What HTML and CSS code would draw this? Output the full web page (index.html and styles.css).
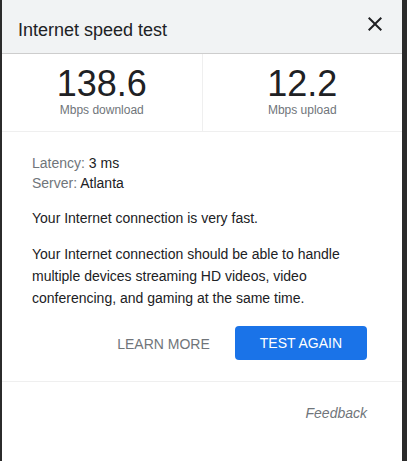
FILE: index.html
```html
<!DOCTYPE html>
<html lang="en">
<head>
<meta charset="utf-8">
<title>Internet speed test</title>
<link rel="stylesheet" href="styles.css">
</head>
<body>
<div class="panel">
  <div class="header">
    <div class="title">Internet speed test</div>
    <svg class="close" width="24" height="24" viewBox="0 0 24 24" aria-label="Close"><path d="M19 6.41L17.59 5 12 10.59 6.41 5 5 6.41 10.59 12 5 17.59 6.41 19 12 13.41 17.59 19 19 17.59 13.41 12z" fill="#202124"/></svg>
  </div>
  <div class="stats">
    <div class="stat">
      <div class="num">138.6</div>
      <div class="label">Mbps download</div>
    </div>
    <div class="stat">
      <div class="num">12.2</div>
      <div class="label">Mbps upload</div>
    </div>
  </div>
  <div class="body">
    <div class="meta">
      <div><span class="key">Latency:</span> 3 ms</div>
      <div><span class="key">Server:</span> Atlanta</div>
    </div>
    <p class="para">Your Internet connection is very fast.</p>
    <p class="para">Your Internet connection should be able to handle multiple devices streaming HD videos, video conferencing, and gaming at the same time.</p>
    <div class="actions">
      <span class="learn">LEARN MORE</span>
      <span class="btn">TEST AGAIN</span>
    </div>
  </div>
  <div class="footer">
    <span class="feedback">Feedback</span>
  </div>
</div>
</body>
</html>
```
FILE: styles.css
```css
html, body {
  margin: 0;
  padding: 0;
}
body {
  background: #2b2b2b;
  font-family: "Liberation Sans", Arial, sans-serif;
  color: #202124;
  height: 461px;
  overflow: hidden;
}
.panel {
  margin-left: 2px;
  width: 400px;
  height: 461px;
  background: #fff;
}
.header {
  background: #f1f3f4;
  height: 54px;
  box-sizing: border-box;
  padding: 18px 16px 0 16px;
  display: flex;
  justify-content: space-between;
  align-items: flex-start;
  border-bottom: 1px solid #cdcdcd;
}
.title {
  font-size: 18px;
  line-height: 24px;
  color: #202124;
}
.close {
  margin-top: -6px;
  margin-right: -0.5px;
}
.stats {
  display: flex;
  border-bottom: 1px solid #efefef;
}
.stat {
  flex: 1;
  text-align: center;
  padding: 12px 0 13px;
}
.stat + .stat {
  border-left: 1px solid #efefef;
}
.num {
  font-size: 36px;
  line-height: 36px;
  color: #202124;
}
.label {
  font-size: 12px;
  line-height: 16px;
  color: #70757a;
}
.body {
  padding: 21px 35px 21px 30px;
  border-bottom: 1px solid #efefef;
}
.meta {
  font-size: 14px;
  line-height: 20px;
}
.key {
  color: #70757a;
}
.para {
  margin: 14px 0 0;
  font-size: 14px;
  line-height: 22px;
}
.actions {
  margin-top: 17px;
  display: flex;
  justify-content: flex-end;
  align-items: center;
  gap: 25px;
}
.learn {
  font-size: 14px;
  color: #70757a;
  margin-top: 2px;
}
.btn {
  background: #1a73e8;
  color: #fff;
  font-size: 14px;
  height: 34px;
  line-height: 34px;
  padding: 0 25px;
  border-radius: 4px;
}
.footer {
  padding: 21px 35px 0 30px;
  text-align: right;
}
.feedback {
  font-size: 14px;
  line-height: 20px;
  font-style: italic;
  color: #70757a;
}
```
